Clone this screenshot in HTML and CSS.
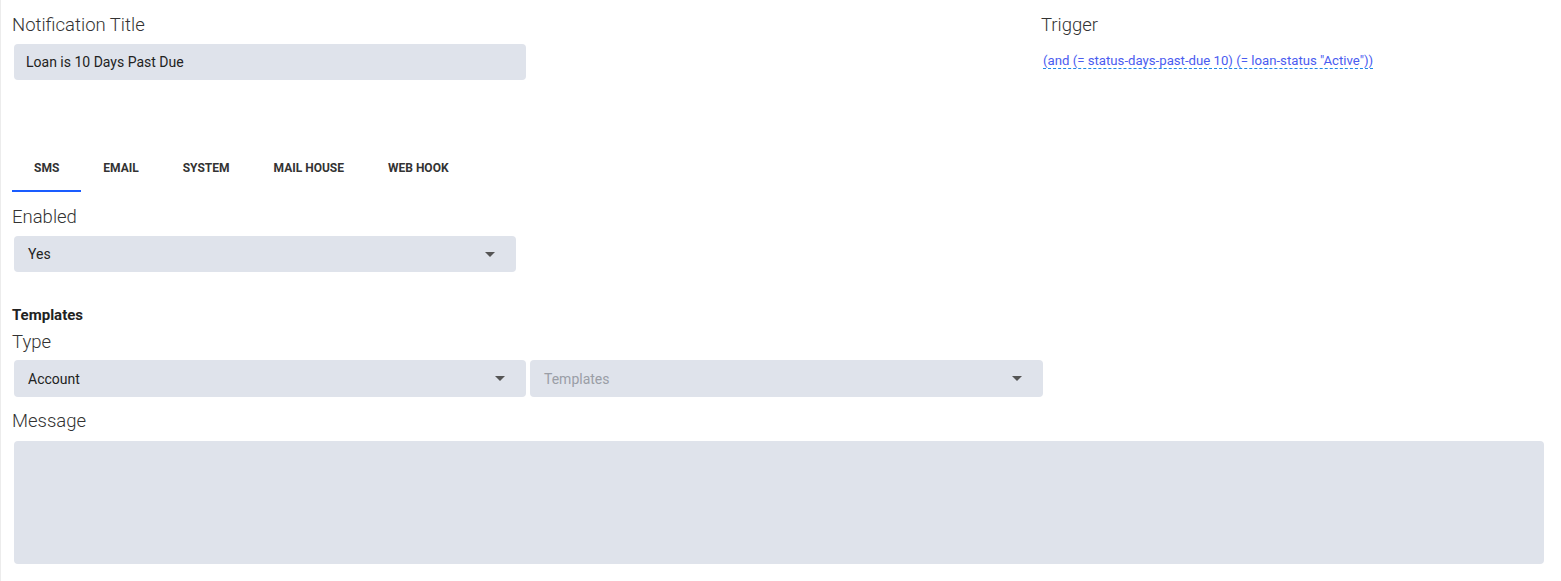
FILE: index.html
```html
<!DOCTYPE html>
<html lang="en">
<head>
    <meta charset="UTF-8">
    <meta name="viewport" content="width=device-width, initial-scale=1.0">
    <title>Notification</title>
    <link rel="stylesheet" href="styles.css">
</head>
<body>
    <div id="app">
        <div class="top-row">
            <div class="field">
                <label class="label">Notification Title</label>
                <input type="text" class="input title-input" value="Loan is 10 Days Past Due">
            </div>
            <div class="field">
                <label class="label">Trigger</label>
                <a href="#" class="trigger">(and (= status-days-past-due 10) (= loan-status "Active"))</a>
            </div>
        </div>

        <ul class="tabs">
            <li class="tab active">SMS</li>
            <li class="tab">EMAIL</li>
            <li class="tab">SYSTEM</li>
            <li class="tab">MAIL HOUSE</li>
            <li class="tab">WEB HOOK</li>
        </ul>

        <div class="tab-body">
            <div class="field">
                <label class="label">Enabled</label>
                <div class="select enabled-select">
                    <span>Yes</span>
                    <span class="caret"></span>
                </div>
            </div>

            <h4 class="section-title">Templates</h4>
            <div class="field">
                <label class="label">Type</label>
                <div class="select-row">
                    <div class="select">
                        <span>Account</span>
                        <span class="caret"></span>
                    </div>
                    <div class="select placeholder">
                        <span>Templates</span>
                        <span class="caret"></span>
                    </div>
                </div>
            </div>

            <div class="field">
                <label class="label">Message</label>
                <textarea class="textarea"></textarea>
            </div>
        </div>
    </div>
</body>
</html>
```

FILE: styles.css
```css
body {
    font-family: Roboto, "Noto Sans", Arial, sans-serif;
    margin: 0;
    padding: 0;
    background-color: #fff;
    color: #333;
}

#app {
    padding: 14px 17px 0 11px;
    border-left: 1px solid #ececec;
    min-height: 581px;
    box-sizing: border-box;
}

.top-row {
    display: grid;
    grid-template-columns: 1029px 1fr;
    height: 129px;
}

.field {
    display: flex;
    flex-direction: column;
}

.label {
    font-size: 18.5px;
    font-weight: 300;
    line-height: 22px;
    color: #333;
    margin-bottom: 8px;
}

.input,
.select,
.textarea {
    background-color: #dfe3eb;
    border: none;
    border-radius: 4px;
    font-family: inherit;
    font-size: 14px;
    color: #222;
    box-sizing: border-box;
    margin-left: 2px;
}

.title-input {
    width: 512px;
    height: 36px;
    padding: 0 12px;
    outline: none;
}

.trigger {
    font-size: 13.2px;
    color: #4a5cf0;
    text-decoration: none;
    border-bottom: 1px dashed #1e88e5;
    align-self: flex-start;
    margin-left: 2px;
    margin-top: 9px;
    line-height: 15px;
}

.tabs {
    list-style: none;
    display: flex;
    margin: 0;
    padding: 0;
    height: 49px;
}

.tab {
    padding: 0 22px;
    font-size: 12px;
    font-weight: 700;
    color: #333;
    line-height: 50px;
    height: 47px;
    border-bottom: 2px solid transparent;
}

.tab.active {
    border-bottom-color: #1a5cff;
}

.tab-body {
    padding-top: 14px;
}

.select {
    display: flex;
    align-items: center;
    justify-content: space-between;
    height: 37px;
    padding: 0 21px 0 14px;
}

.enabled-select {
    width: 502px;
    height: 36px;
}

.caret {
    width: 0;
    height: 0;
    border-left: 5px solid transparent;
    border-right: 5px solid transparent;
    border-top: 5px solid #555;
}

.placeholder {
    color: #9a9ea6;
}

.section-title {
    font-size: 15px;
    font-weight: 700;
    color: #222;
    margin: 34px 0 0 0;
    line-height: 18px;
}

.section-title + .field .label {
    margin-top: 7px;
    margin-bottom: 7px;
}

.tab-body .field + .field .label {
    margin-top: 13px;
    margin-bottom: 9px;
}

.select-row {
    display: flex;
    gap: 4px;
}

.select-row .select {
    width: 512px;
}

.select-row .select + .select {
    width: 513px;
    margin-left: 0;
}

.textarea {
    width: 1530px;
    height: 123px;
    resize: none;
    outline: none;
    padding: 12px;
}
```
